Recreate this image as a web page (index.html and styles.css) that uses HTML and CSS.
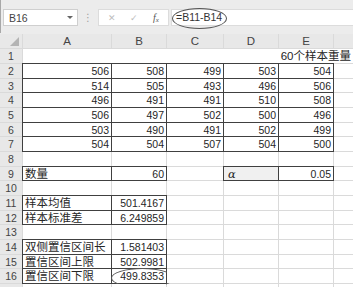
FILE: index.html
```html
<!DOCTYPE html>
<html lang="zh">
<head>
  <meta charset="UTF-8">
  <title>置信区间</title>
  <link rel="stylesheet" href="styles.css">
</head>
<body>
<div class="toolbar">
  <div class="namebox"><span>B16</span><span class="caret"></span></div>
  <div class="grip">⋮</div>
  <div class="fbtns">
    <span class="btn">✕</span>
    <span class="btn">✓</span>
    <span class="fx">f<sub>x</sub></span>
  </div>
  <div class="formula"><span class="ftext">=B11-B14</span><span class="ring fring"></span></div>
</div>

<div class="sheet">
  <div class="corner"><span class="tri"></span></div>
  <div class="ch">A</div><div class="ch">B</div><div class="ch">C</div><div class="ch">D</div><div class="ch">E</div><div class="ch"></div>

  <div class="rh">1</div>
  <div class="c merged">60个样本重量</div>

  <div class="rh">2</div>
  <div class="c n b">506</div><div class="c n b">508</div><div class="c n b">499</div><div class="c n b">503</div><div class="c n b">504</div><div class="c"></div>
  <div class="rh">3</div>
  <div class="c n b">514</div><div class="c n b">505</div><div class="c n b">493</div><div class="c n b">496</div><div class="c n b">506</div><div class="c"></div>
  <div class="rh">4</div>
  <div class="c n b">496</div><div class="c n b">491</div><div class="c n b">491</div><div class="c n b">510</div><div class="c n b">508</div><div class="c"></div>
  <div class="rh">5</div>
  <div class="c n b">506</div><div class="c n b">497</div><div class="c n b">502</div><div class="c n b">500</div><div class="c n b">496</div><div class="c"></div>
  <div class="rh">6</div>
  <div class="c n b">503</div><div class="c n b">490</div><div class="c n b">491</div><div class="c n b">502</div><div class="c n b">499</div><div class="c"></div>
  <div class="rh">7</div>
  <div class="c n b">504</div><div class="c n b">504</div><div class="c n b">507</div><div class="c n b">504</div><div class="c n b">500</div><div class="c"></div>

  <div class="rh">8</div>
  <div class="c"></div><div class="c"></div><div class="c"></div><div class="c"></div><div class="c"></div><div class="c"></div>
  <div class="rh">9</div>
  <div class="c b">数量</div><div class="c n b">60</div><div class="c"></div><div class="c b alpha">α</div><div class="c n b">0.05</div><div class="c"></div>
  <div class="rh">10</div>
  <div class="c"></div><div class="c"></div><div class="c"></div><div class="c"></div><div class="c"></div><div class="c"></div>
  <div class="rh">11</div>
  <div class="c b">样本均值</div><div class="c n b">501.4167</div><div class="c"></div><div class="c"></div><div class="c"></div><div class="c"></div>
  <div class="rh">12</div>
  <div class="c b">样本标准差</div><div class="c n b">6.249859</div><div class="c"></div><div class="c"></div><div class="c"></div><div class="c"></div>
  <div class="rh">13</div>
  <div class="c"></div><div class="c"></div><div class="c"></div><div class="c"></div><div class="c"></div><div class="c"></div>
  <div class="rh">14</div>
  <div class="c b">双侧置信区间长</div><div class="c n b">1.581403</div><div class="c"></div><div class="c"></div><div class="c"></div><div class="c"></div>
  <div class="rh">15</div>
  <div class="c b">置信区间上限</div><div class="c n b">502.9981</div><div class="c"></div><div class="c"></div><div class="c"></div><div class="c"></div>
  <div class="rh">16</div>
  <div class="c b">置信区间下限</div><div class="c n b">499.8353<span class="ring cring"></span></div><div class="c"></div><div class="c"></div><div class="c"></div><div class="c"></div>
  <div class="rh"></div>
  <div class="c"></div><div class="c"></div><div class="c"></div><div class="c"></div><div class="c"></div><div class="c"></div>
</div>
</body>
</html>
```

FILE: styles.css
```css
body {
  margin: 0;
  width: 353px;
  height: 287px;
  overflow: hidden;
  background: #fff;
  color: #262626;
  font-family: "Liberation Sans", "Noto Sans CJK SC", sans-serif;
  font-size: 11.5px;
}

/* formula bar */
.toolbar {
  height: 33px;
  box-sizing: border-box;
  padding-top: 9px;
  display: flex;
  align-items: flex-start;
  background: #ececec;
  border-left: 1px solid #a8a8a8;
}
.namebox {
  margin-left: 2px;
  width: 75px;
  height: 17px;
  box-sizing: border-box;
  padding: 0 4px 0 5px;
  display: flex;
  align-items: center;
  justify-content: space-between;
  background: #fff;
  border: 1px solid #cfcfcf;
  color: #444;
  font-size: 10.5px;
}
.caret {
  border-left: 3px solid transparent;
  border-right: 3px solid transparent;
  border-top: 3px solid #666;
}
.grip {
  width: 20px;
  height: 17px;
  line-height: 17px;
  text-align: center;
  color: #a0a0a0;
  font-family: "DejaVu Sans", sans-serif;
  font-size: 10px;
}
.fbtns {
  width: 71px;
  height: 17px;
  box-sizing: border-box;
  display: flex;
  align-items: center;
  padding-left: 9px;
  background: #fff;
  border: 1px solid #dcdcdc;
}
.btn {
  width: 22px;
  color: #bdbdbd;
  font-family: "DejaVu Sans", sans-serif;
  font-size: 9px;
}
.fx {
  margin-left: 1px;
  color: #555;
  font-family: "Liberation Serif", serif;
  font-style: italic;
  font-size: 10px;
}
.fx sub {
  font-size: 7px;
  vertical-align: -1px;
}
.formula {
  position: relative;
  flex: 1;
  height: 17px;
  box-sizing: border-box;
  margin-left: 2px;
  padding-left: 4px;
  line-height: 15px;
  background: #fff;
  border: 1px solid #dcdcdc;
  border-right: none;
  font-size: 10.5px;
}
.ftext {
  color: #333;
}
.ring {
  position: absolute;
  border: 1px solid #555;
  border-radius: 50%;
}
.fring {
  left: 0;
  top: -2px;
  width: 53px;
  height: 19px;
}

/* sheet */
.sheet {
  display: grid;
  grid-template-columns: 22px 88px 54px 56px 54px 54px 1fr;
  grid-template-rows: 14px 14px repeat(16, 13.67px);
  gap: 1px;
  background: #dadada;
  border-top: 1px solid #ececec;
}
.corner, .ch, .rh {
  background: #e8e8e8;
  color: #444;
}
.corner {
  display: flex;
  align-items: flex-end;
  justify-content: flex-end;
  padding: 0 3px 2px 0;
}
.tri {
  width: 0;
  height: 0;
  border-left: 9px solid transparent;
  border-bottom: 9px solid #b4b4b4;
}
.ch {
  text-align: center;
  line-height: 14px;
}
.rh {
  text-align: center;
  line-height: 14px;
  font-size: 10.5px;
}
.c {
  position: relative;
  background: #fff;
  padding: 0 2px;
  line-height: 14px;
  white-space: nowrap;
}
.n {
  text-align: right;
  font-size: 10.5px;
}
.merged {
  grid-column: 2 / -1;
  text-align: right;
}
.b {
  outline: 1px solid #404040;
}
.alpha {
  background: #f0f0f0;
  font-family: "DejaVu Serif", serif;
  font-style: italic;
  padding-left: 4px;
}
.cring {
  left: -1px;
  top: -1px;
  width: 61px;
  height: 18px;
}
```
